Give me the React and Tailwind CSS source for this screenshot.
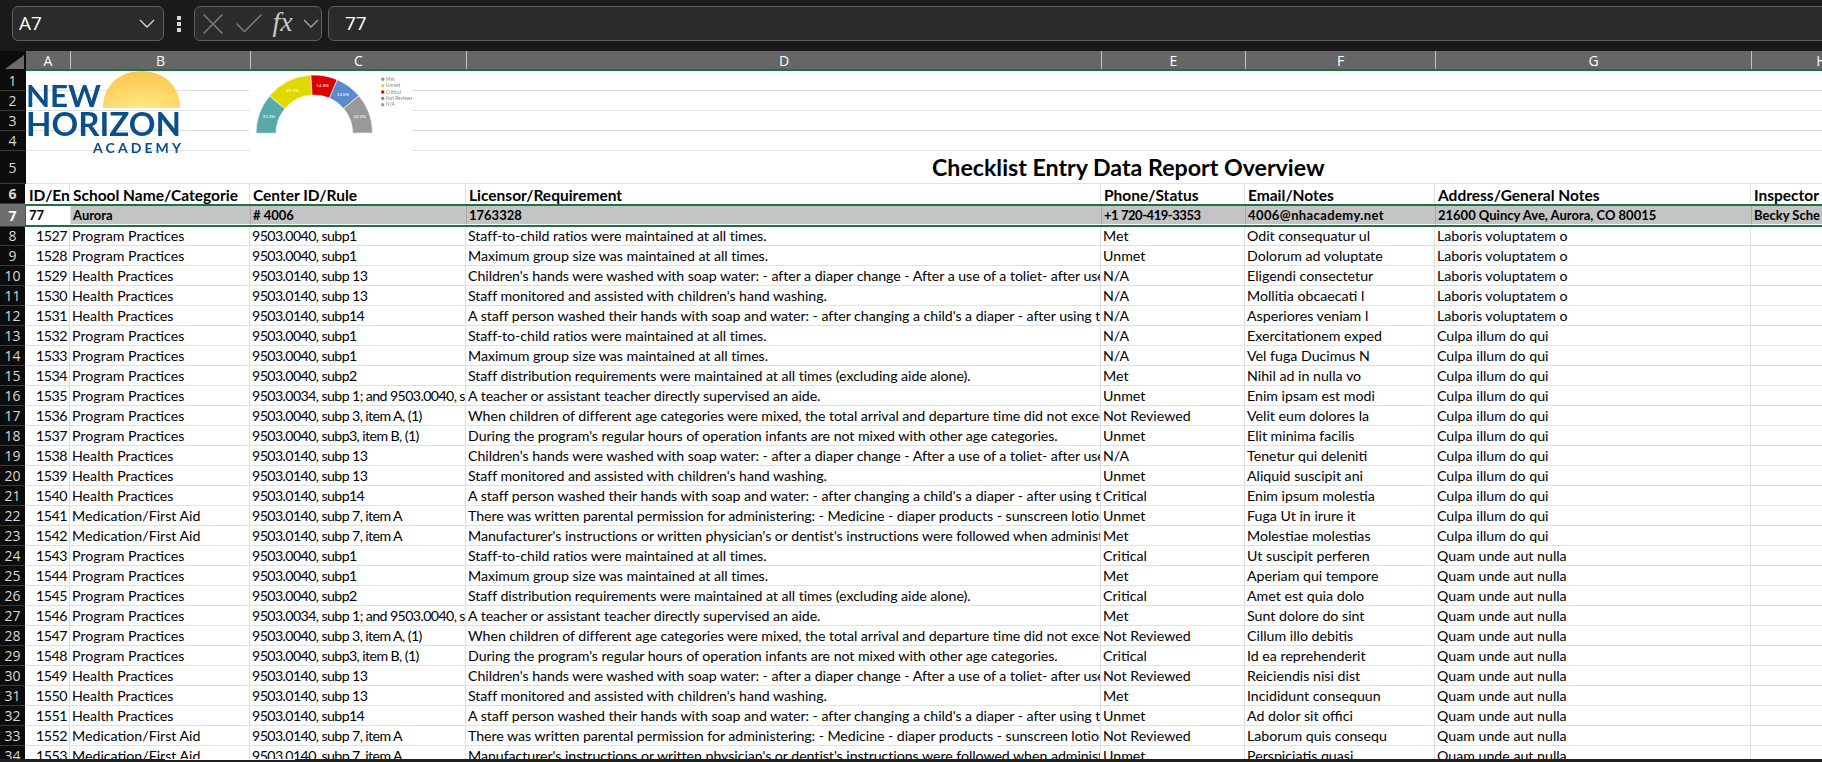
import { X, Check } from "lucide-react";

const S = "Staff-to-child ratios were maintained at all times.";
const M = "Maximum group size was maintained at all times.";
const CH = "Children's hands were washed with soap water: - after a diaper change - After a use of a toliet- after use of a wipe";
const SM = "Staff monitored and assisted with children's hand washing.";
const AS = "A staff person washed their hands with soap and water: - after changing a child's a diaper - after using the toilet";
const DI = "Staff distribution requirements were maintained at all times (excluding aide alone).";
const AT = "A teacher or assistant teacher directly supervised an aide.";
const WH = "When children of different age categories were mixed, the total arrival and departure time did not exceed the limit";
const DU = "During the program's regular hours of operation infants are not mixed with other age categories.";
const TH = "There was written parental permission for administering: - Medicine - diaper products - sunscreen lotion - insect repellent";
const MA = "Manufacturer's instructions or written physician's or dentist's instructions were followed when administering medicine";

const PP = "Program Practices";
const HP = "Health Practices";
const MF = "Medication/First Aid";

const R1 = "9503.0040, subp1";
const R2 = "9503.0040, subp2";
const R13 = "9503.0140, subp 13";
const R14 = "9503.0140, subp14";
const R34 = "9503.0034, subp 1; and 9503.0040, subp 1";
const R3A = "9503.0040, subp 3, item A, (1)";
const R3B = "9503.0040, subp3, item B, (1)";
const R7 = "9503.0140, subp 7, item A";

const LAB = "Laboris voluptatem o";
const CUL = "Culpa illum do qui";
const QUA = "Quam unde aut nulla";
const NR = "Not Reviewed";

const rows = [
  [1527, PP, R1, S, "Met", "Odit consequatur ul", LAB],
  [1528, PP, R1, M, "Unmet", "Dolorum ad voluptate", LAB],
  [1529, HP, R13, CH, "N/A", "Eligendi consectetur", LAB],
  [1530, HP, R13, SM, "N/A", "Mollitia obcaecati l", LAB],
  [1531, HP, R14, AS, "N/A", "Asperiores veniam l", LAB],
  [1532, PP, R1, S, "N/A", "Exercitationem exped", CUL],
  [1533, PP, R1, M, "N/A", "Vel fuga Ducimus N", CUL],
  [1534, PP, R2, DI, "Met", "Nihil ad in nulla vo", CUL],
  [1535, PP, R34, AT, "Unmet", "Enim ipsam est modi", CUL],
  [1536, PP, R3A, WH, NR, "Velit eum dolores la", CUL],
  [1537, PP, R3B, DU, "Unmet", "Elit minima facilis", CUL],
  [1538, HP, R13, CH, "N/A", "Tenetur qui deleniti", CUL],
  [1539, HP, R13, SM, "Unmet", "Aliquid suscipit ani", CUL],
  [1540, HP, R14, AS, "Critical", "Enim ipsum molestia", CUL],
  [1541, MF, R7, TH, "Unmet", "Fuga Ut in irure it", CUL],
  [1542, MF, R7, MA, "Met", "Molestiae molestias", CUL],
  [1543, PP, R1, S, "Critical", "Ut suscipit perferen", QUA],
  [1544, PP, R1, M, "Met", "Aperiam qui tempore", QUA],
  [1545, PP, R2, DI, "Critical", "Amet est quia dolo", QUA],
  [1546, PP, R34, AT, "Met", "Sunt dolore do sint", QUA],
  [1547, PP, R3A, WH, NR, "Cillum illo debitis", QUA],
  [1548, PP, R3B, DU, "Critical", "Id ea reprehenderit", QUA],
  [1549, HP, R13, CH, NR, "Reiciendis nisi dist", QUA],
  [1550, HP, R13, SM, "Met", "Incididunt consequun", QUA],
  [1551, HP, R14, AS, "Unmet", "Ad dolor sit offici", QUA],
  [1552, MF, R7, TH, NR, "Laborum quis consequ", QUA],
  [1553, MF, R7, MA, "Unmet", "Perspiciatis quasi", QUA],
];

const columns = [
  { label: "A", cls: "w-[45px]" },
  { label: "B", cls: "w-[180px]" },
  { label: "C", cls: "w-[216px]" },
  { label: "D", cls: "w-[635px]" },
  { label: "E", cls: "w-[144px]" },
  { label: "F", cls: "w-[190px]" },
  { label: "G", cls: "w-[316px]" },
  { label: "H", cls: "w-[140px]" },
];

const Chevron = ({ cls = "" }) => (
  <svg width="16" height="9" viewBox="0 0 16 9" fill="none" className={cls}>
    <path d="M1 1L8 8L15 1" stroke="currentColor" strokeWidth="1.3" />
  </svg>
);

const RowHead = ({ n, cls = "", active }) => (
  <div
    className={`w-[25px] shrink-0 flex items-center justify-center border-b border-[#3a3a3a] font-['Open_Sans',sans-serif] text-[14px] ${
      active ? "bg-[#6e6e6e] text-white" : "bg-[#0c0c0c] text-[#d8d8d8]"
    } ${cls}`}
  >
    {n}
  </div>
);

const Cell = ({ col, children, cls = "" }) => (
  <div
    className={`${columns[col].cls} shrink-0 overflow-hidden whitespace-nowrap border-r border-[#e0e0e0] pl-[2px] ${cls}`}
  >
    {children}
  </div>
);

const BlankRow = ({ n }) => (
  <div className="flex h-5">
    <RowHead n={n} />
    <div className="w-px bg-[#0c0c0c]" />
    <div className="flex-1 border-b border-[#e0e0e0]" />
  </div>
);

const Logo = () => (
  <svg className="absolute left-0 top-0 blur-[0.3px]" width="200" height="90" viewBox="0 0 200 90">
    <defs>
      <radialGradient id="sun" cx="50%" cy="100%" r="100%">
        <stop offset="0%" stopColor="#ffe987" />
        <stop offset="55%" stopColor="#ffd564" />
        <stop offset="100%" stopColor="#f9c552" />
      </radialGradient>
    </defs>
    <path d="M77 37 C77 14 94 0 115.5 0 C137 0 154 14 154 37 Z" fill="url(#sun)" />
    <text x="0" y="36" fontFamily="Lato, sans-serif" fontSize="31" fontWeight="700" fill="#0b4f8a" textLength="75" lengthAdjust="spacingAndGlyphs">NEW</text>
    <text x="0" y="65" fontFamily="Lato, sans-serif" fontSize="32" fontWeight="700" fill="#0b4f8a" textLength="155" lengthAdjust="spacingAndGlyphs">HORIZON</text>
    <text x="67" y="82" fontFamily="Lato, sans-serif" fontSize="14" fontWeight="700" fill="#0b4f8a" textLength="88" lengthAdjust="spacing">ACADEMY</text>
  </svg>
);

// half donut, angles run left to right over the top
const segs = [
  { pct: 22.2, color: "#5aa9a9", label: "22.2%" },
  { pct: 25.9, color: "#e0d900", label: "25.9%" },
  { pct: 14.8, color: "#dc0000", label: "14.8%" },
  { pct: 14.8, color: "#5a8bcb", label: "14.8%" },
  { pct: 22.2, color: "#999999", label: "22.2%" },
];
const legend = [
  ["Met", "#5aa9a9"],
  ["Unmet", "#e0d900"],
  ["Critical", "#dc0000"],
  ["Not Reviewed", "#5a8bcb"],
  ["N/A", "#999999"],
];

const pt = (cx, cy, r, a) => [cx - r * Math.cos(a), cy - r * Math.sin(a)];

const Gauge = () => {
  const cx = 64.3;
  const cy = 62.3;
  const R = 58.3;
  const r = 38.3;
  let acc = 0;
  return (
    <div className="absolute left-[224px] top-0 w-[162px] h-[81px] bg-white">
      <svg width="162" height="81" viewBox="0 0 162 81" className="blur-[0.3px]">
        {segs.map((s) => {
          const a0 = (acc / 100) * Math.PI;
          acc += s.pct;
          const a1 = (acc / 100) * Math.PI;
          const mid = (a0 + a1) / 2;
          const [x0, y0] = pt(cx, cy, R, a0);
          const [x1, y1] = pt(cx, cy, R, a1);
          const [x2, y2] = pt(cx, cy, r, a1);
          const [x3, y3] = pt(cx, cy, r, a0);
          const [tx, ty] = pt(cx, cy, (R + r) / 2, mid);
          return (
            <g key={s.color}>
              <path
                d={`M${x0} ${y0} A${R} ${R} 0 0 1 ${x1} ${y1} L${x2} ${y2} A${r} ${r} 0 0 0 ${x3} ${y3} Z`}
                fill={s.color}
                stroke="#fff"
                strokeWidth="0.7"
              />
              <text x={tx} y={ty + 1.5} textAnchor="middle" fontSize="4.5" fontFamily="Lato, sans-serif" fill="#fff">
                {s.label}
              </text>
            </g>
          );
        })}
        {legend.map(([name, color], i) => (
          <g key={name}>
            <circle cx="132.7" cy={8.3 + i * 6.35} r="1.7" fill={color} />
            <text x="136" y={9.9 + i * 6.35} fontSize="4.8" fontFamily="Lato, sans-serif" fill="#888">
              {name}
            </text>
          </g>
        ))}
      </svg>
    </div>
  );
};

export default function App() {
  return (
    <div className="w-[1822px] h-screen flex flex-col overflow-hidden bg-white font-['Lato',sans-serif] text-black">
      {/* formula bar */}
      <div className="h-[51px] shrink-0 bg-[#1a1a1c] flex items-start pt-[6px] pl-3 font-['Open_Sans',sans-serif] text-white">
        <div className="w-[152px] h-[35px] shrink-0 rounded-[6px] border border-[#5e5e5e] bg-[#2b2b2b] flex items-center justify-between pl-[6px] pr-[8px]">
          <span className="text-[19px]">A7</span>
          <Chevron cls="text-[#d8d8d8]" />
        </div>
        <div className="w-[30px] shrink-0 h-[35px] flex flex-col items-center justify-center gap-[2px]">
          <span className="w-[4px] h-[4px] bg-[#d8d8d8]" />
          <span className="w-[4px] h-[4px] bg-[#d8d8d8]" />
          <span className="w-[4px] h-[4px] bg-[#d8d8d8]" />
        </div>
        <div className="w-[128px] h-[35px] shrink-0 rounded-[6px] border border-[#5e5e5e] bg-[#2b2b2b] flex items-center">
          <X size={36} strokeWidth={1} className="text-[#7c7c7c] shrink-0" />
          <Check size={36} strokeWidth={1} className="text-[#7c7c7c] shrink-0" />
          <span className="w-[31px] shrink-0 text-center font-['Liberation_Serif',serif] italic text-[28px] leading-none text-[#c8c8c8] -mt-[3px]">fx</span>
          <Chevron cls="text-[#a8a8a8] ml-[5px] shrink-0" />
        </div>
        <div className="ml-[6px] w-[1520px] h-[35px] shrink-0 rounded-[6px] border border-[#5e5e5e] bg-[#2b2b2b] flex items-center pl-4 text-[19px]">
          77
        </div>
      </div>

      {/* sheet */}
      <div className="flex-1 min-h-0 overflow-hidden">
        {/* column letters */}
        <div className="flex h-5 border-b-2 border-[#1f7145]">
          <div className="w-[26px] shrink-0 bg-[#0c0c0c] -mb-[2px] flex items-end justify-end pr-[2px] pb-[2px]">
            <svg width="19" height="14" viewBox="0 0 19 14">
              <path d="M19 0V14H0Z" fill="#6a6a6a" />
            </svg>
          </div>
          {columns.map((c) => (
            <div
              key={c.label}
              className={`${c.cls} shrink-0 bg-[#666666] border-r border-[#c4c4c4] flex items-center justify-center font-['Open_Sans',sans-serif] text-[14px] text-white`}
            >
              {c.label}
            </div>
          ))}
        </div>

        {/* rows 1-5, logo and chart sit over them */}
        <div className="relative">
          <BlankRow n={1} />
          <BlankRow n={2} />
          <BlankRow n={3} />
          <BlankRow n={4} />
          <div className="flex h-[33px]">
            <RowHead n={5} />
            <div className="w-px bg-[#0c0c0c]" />
            <div className="flex-1 border-b border-[#e0e0e0] pl-[906px] flex items-center text-[23.2px] font-bold whitespace-nowrap">
              Checklist Entry Data Report Overview
            </div>
          </div>
          <div className="absolute left-[26px] top-0">
            <Logo />
            <Gauge />
          </div>
        </div>

        {/* row 6 headings */}
        <div className="flex h-5 text-[15.5px] font-bold leading-[22px]">
          <RowHead n={6} />
          <div className="w-px bg-[#0c0c0c]" />
          <Cell col={0} cls="pl-[4px]">ID/En</Cell>
          <Cell col={1} cls="pl-[3px]">School Name/Categorie</Cell>
          <Cell col={2} cls="pl-[3px]">Center ID/Rule</Cell>
          <Cell col={3} cls="pl-[3px]">Licensor/Requirement</Cell>
          <Cell col={4} cls="pl-[3px]">Phone/Status</Cell>
          <Cell col={5} cls="pl-[3px]">Email/Notes</Cell>
          <Cell col={6} cls="pl-[3px]">Address/General Notes</Cell>
          <Cell col={7} cls="pl-[3px] border-r-0">Inspector</Cell>
        </div>

        {/* row 7, the selected row */}
        <div className="flex h-[23px] text-[13px] font-bold">
          <RowHead n={7} active />
          <div className="flex-1 flex border-y-2 border-l-[1px] border-[#1f7145] leading-[18px]">
            <Cell col={0} cls="pl-[3px] bg-white border-[#c4c4c4]">77</Cell>
            <Cell col={1} cls="bg-[#c4c4c4] border-b border-b-white border-r-[#a8a8a8]">Aurora</Cell>
            <Cell col={2} cls="bg-[#c4c4c4] border-b border-b-white border-r-[#a8a8a8]"># 4006</Cell>
            <Cell col={3} cls="bg-[#c4c4c4] border-b border-b-white border-r-[#a8a8a8]">1763328</Cell>
            <Cell col={4} cls="bg-[#c4c4c4] border-b border-b-white border-r-[#a8a8a8] tracking-[-0.45px]">+1 720-419-3353</Cell>
            <Cell col={5} cls="bg-[#c4c4c4] border-b border-b-white border-r-[#a8a8a8] tracking-[0.4px]">4006@nhacademy.net</Cell>
            <Cell col={6} cls="bg-[#c4c4c4] border-b border-b-white border-r-[#a8a8a8]">21600 Quincy Ave, Aurora, CO 80015</Cell>
            <Cell col={7} cls="bg-[#c4c4c4] border-b border-b-white border-r-0">Becky Sche</Cell>
          </div>
        </div>

        {/* data rows */}
        {rows.map((r, i) => (
          <div key={r[0]} className={`flex text-[14.2px] ${i === 0 ? "h-[19px] leading-[18px]" : "h-5 leading-[19px]"}`}>
            <RowHead n={i + 8} />
            <div className="w-px bg-[#0c0c0c]" />
            <div className="flex flex-1 border-b border-[#e0e0e0]">
              <Cell col={0} cls="text-right pr-[2px] tracking-[-0.5px]">{r[0]}</Cell>
              <Cell col={1}>{r[1]}</Cell>
              <Cell col={2} cls="tracking-[-0.6px]">{r[2]}</Cell>
              <Cell col={3} cls="tracking-[-0.05px]">{r[3]}</Cell>
              <Cell col={4}>{r[4]}</Cell>
              <Cell col={5}>{r[5]}</Cell>
              <Cell col={6}>{r[6]}</Cell>
              <Cell col={7} cls="border-r-0" />
            </div>
          </div>
        ))}
      </div>

      {/* bottom edge of the window */}
      <div className="h-[3px] shrink-0 flex items-end">
        <div className="w-[165px] h-[3px] bg-[#202020]" />
        <div className="w-[130px] h-[2px] bg-[#202020]" />
        <div className="flex-1 h-[3px] bg-[#202020]" />
      </div>
    </div>
  );
}
